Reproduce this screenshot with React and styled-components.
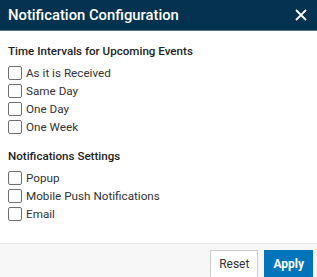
import React, { useState } from 'react';
import styled, { createGlobalStyle } from 'styled-components';

const GlobalStyle = createGlobalStyle`
  html, body {
    margin: 0;
    padding: 0;
    background: #fff;
    font-family: Roboto, "Liberation Sans", sans-serif;
  }
`;

const Dialog = styled.div`
  width: 317px;
  height: 277px;
  display: flex;
  flex-direction: column;
  background: #fff;
  overflow: hidden;
`;

const Header = styled.div`
  height: 31px;
  flex: none;
  display: flex;
  align-items: center;
  justify-content: space-between;
  padding: 0 10px 1px 8px;
  background: #04324f;
  color: #fff;
  border-bottom: 1px solid #5b7688;
  box-sizing: border-box;
`;

const Title = styled.h1`
  margin: 0;
  font-size: 14.8px;
  font-weight: 500;
`;

const CloseButton = styled.button`
  border: none;
  background: none;
  padding: 0;
  color: #fff;
  display: flex;
  cursor: pointer;
`;

const Body = styled.div`
  flex: 1;
  padding: 13px 8px 0;
`;

const Section = styled.div`
  margin-bottom: 13px;
`;

const SectionTitle = styled.div`
  font-size: 11.6px;
  font-weight: 500;
  color: #222;
  margin-bottom: 6px;
`;

const Option = styled.label`
  display: flex;
  align-items: center;
  gap: 4px;
  height: 18px;
  font-size: 11.7px;
  color: #333;
  cursor: pointer;
`;

const Box = styled.span`
  width: 12px;
  height: 12px;
  border: 1px solid #6f6f6f;
  border-radius: 2px;
  background: ${p => (p.checked ? '#0275bd' : '#fff')};
`;

const Footer = styled.div`
  height: 34px;
  flex: none;
  display: flex;
  justify-content: flex-end;
  align-items: flex-start;
  gap: 6px;
  padding: 6px 4px 0 0;
  background: #f7f7f7;
  border-top: 1px solid #e6e6e6;
  box-sizing: border-box;
`;

const Button = styled.button`
  height: 28px;
  padding: 0 8px;
  font-family: inherit;
  font-size: 12px;
  font-weight: ${p => (p.primary ? 700 : 400)};
  color: ${p => (p.primary ? '#fff' : '#333')};
  background: ${p => (p.primary ? '#0174bb' : '#fff')};
  border: 1px solid ${p => (p.primary ? '#0174bb' : '#ccc')};
  cursor: pointer;
`;

const intervals = ['As it is Received', 'Same Day', 'One Day', 'One Week'];
const channels = ['Popup', 'Mobile Push Notifications', 'Email'];

function CheckList({ items, checked, toggle }) {
  return items.map(item => (
    <Option key={item} onClick={() => toggle(item)}>
      <Box checked={checked[item]} />
      {item}
    </Option>
  ));
}

export default function App() {
  const [checked, setChecked] = useState({});
  const toggle = item => setChecked({ ...checked, [item]: !checked[item] });

  return (
    <Dialog>
      <GlobalStyle />
      <Header>
        <Title>Notification Configuration</Title>
        <CloseButton aria-label="Close">
          <svg width="12" height="12" viewBox="0 0 12 12">
            <path d="M1 1L11 11M11 1L1 11" stroke="#fff" strokeWidth="1.8" />
          </svg>
        </CloseButton>
      </Header>
      <Body>
        <Section>
          <SectionTitle>Time Intervals for Upcoming Events</SectionTitle>
          <CheckList items={intervals} checked={checked} toggle={toggle} />
        </Section>
        <Section>
          <SectionTitle>Notifications Settings</SectionTitle>
          <CheckList items={channels} checked={checked} toggle={toggle} />
        </Section>
      </Body>
      <Footer>
        <Button onClick={() => setChecked({})}>Reset</Button>
        <Button primary>Apply</Button>
      </Footer>
    </Dialog>
  );
}
